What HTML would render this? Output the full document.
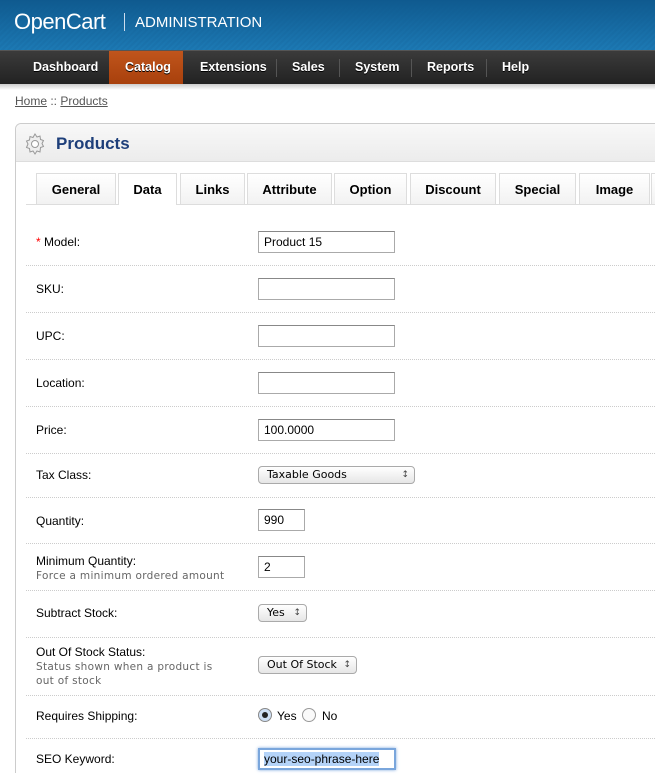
<!DOCTYPE html>
<html><head><meta charset="utf-8"><style>
*{margin:0;padding:0;box-sizing:border-box}
html{overflow:hidden;height:780px}
body{width:655px;height:780px;overflow:hidden;background:#fff;font-family:"Liberation Sans",sans-serif;font-size:12px;color:#000;position:relative}
.a{position:absolute}
#hdr{left:0;top:0;width:655px;height:50px;background:repeating-linear-gradient(135deg,#1a6fa8 0 2px,#1c76b0 2px 4px);background-color:#1b72ac}
#hdr:after{content:"";position:absolute;left:0;right:0;top:0;bottom:0;background:linear-gradient(#0f5a8f,rgba(30,130,190,.3));}
#nav{left:0;top:50px;width:655px;height:34px;background:linear-gradient(#3b3b3b,#222);border-top:1px solid #555}
.ni{top:0;height:33px;line-height:33px;color:#fff;font-size:12.5px;font-weight:bold;text-shadow:0 1px 0 #000}
.sep{top:8px;width:1px;height:18px;background:#555}
.lbl{left:36px;font-size:12px}
.sub{color:#666;font-family:"DejaVu Sans",sans-serif;font-size:10.5px;letter-spacing:.3px}
.ln{left:26px;width:629px;border-top:1px dotted #ccc;height:0}
.in{left:258px;width:137px;height:22px;border:1px solid #aaa;border-top-color:#888;background:#fff;padding:2px 5px;font-size:12px;line-height:16px}
.sel{height:18px;border:1px solid #aaa;border-radius:4px;background:linear-gradient(#fff,#e6e6e6);font-size:11px;line-height:16px;padding-left:8px;font-family:"DejaVu Sans",sans-serif}
.sel:after{content:"\2195";position:absolute;right:5px;top:0;font-size:9px;color:#444}
.tab{top:173px;height:31px;border:1px solid #ddd;border-bottom:none;background:linear-gradient(#fff,#f2f2f2);font-weight:bold;font-size:13px;text-align:center;line-height:31px}
</style></head><body>
<div id="hdr" class="a"></div>
<div class="a" style="left:14px;top:9px;color:#fff;font-size:22px;z-index:2;letter-spacing:-.5px">OpenCart</div>
<div class="a" style="left:124px;top:13px;width:1px;height:18px;background:#cde;z-index:2"></div>
<div class="a" style="left:135px;top:14px;color:#fff;font-size:15px;z-index:2">ADMINISTRATION</div>
<div id="nav" class="a">
<div class="a ni" style="left:33px">Dashboard</div>
<div class="a" style="left:109px;top:0;width:74px;height:33px;background:linear-gradient(#c0551c,#a8400c)"></div>
<div class="a ni" style="left:125px">Catalog</div>
<div class="a ni" style="left:200px">Extensions</div><div class="a sep" style="left:276px"></div>
<div class="a ni" style="left:292px">Sales</div><div class="a sep" style="left:339px"></div>
<div class="a ni" style="left:355px">System</div><div class="a sep" style="left:411px"></div>
<div class="a ni" style="left:427px">Reports</div><div class="a sep" style="left:486px"></div>
<div class="a ni" style="left:502px">Help</div>
</div>
<div class="a" style="left:0;top:84px;width:655px;height:6px;background:linear-gradient(#ccc,#fff)"></div>
<div class="a" style="left:15px;top:94px;color:#555;font-size:12px"><u>Home</u> :: <u>Products</u></div>
<div class="a" style="left:15px;top:123px;width:650px;height:650px;border:1px solid #ccc;border-bottom:none;border-radius:6px 0 0 0"></div>
<div class="a" style="left:16px;top:124px;width:640px;height:38px;background:linear-gradient(#f8f8f8,#ececec);border-bottom:1px solid #ddd;border-radius:6px 0 0 0"></div>
<svg class="a" style="left:23px;top:132px" width="24" height="24" viewBox="0 0 24 24"><path d="M12 2l2 3 3-1 .5 3.5 3 1-1.5 3 1.5 3-3 1L17 20l-3-1-2 3-2-3-3 1-.5-3.5-3-1L5 12 3.5 9l3-1L7 4.5l3 1z" fill="#eee" stroke="#999"/><circle cx="12" cy="12" r="3.5" fill="#fff" stroke="#999"/></svg>
<div class="a" style="left:56px;top:134px;color:#1e3f7a;font-weight:bold;font-size:17px">Products</div>
<div class="a" style="left:26px;top:204px;width:629px;border-top:1px solid #ddd"></div>
<div class="a tab" style="left:36px;width:80px">General</div>
<div class="a tab" style="left:118px;width:59px;height:32px;background:#fff">Data</div>
<div class="a tab" style="left:180px;width:65px">Links</div>
<div class="a tab" style="left:247px;width:85px">Attribute</div>
<div class="a tab" style="left:334px;width:73px">Option</div>
<div class="a tab" style="left:410px;width:86px">Discount</div>
<div class="a tab" style="left:499px;width:77px">Special</div>
<div class="a tab" style="left:579px;width:71px">Image</div>
<div class="a tab" style="left:651px;width:20px"></div>

<div class="a lbl" style="top:235px"><span style="color:red">*</span> Model:</div>
<div class="a in" style="top:231px">Product 15</div>
<div class="a ln" style="top:265px"></div>
<div class="a lbl" style="top:282px">SKU:</div><div class="a in" style="top:278px"></div>
<div class="a ln" style="top:312px"></div>
<div class="a lbl" style="top:329px">UPC:</div><div class="a in" style="top:325px"></div>
<div class="a ln" style="top:359px"></div>
<div class="a lbl" style="top:376px">Location:</div><div class="a in" style="top:372px"></div>
<div class="a ln" style="top:406px"></div>
<div class="a lbl" style="top:423px">Price:</div><div class="a in" style="top:419px">100.0000</div>
<div class="a ln" style="top:453px"></div>
<div class="a lbl" style="top:468px">Tax Class:</div><div class="a sel" style="left:258px;top:466px;width:157px">Taxable Goods</div>
<div class="a ln" style="top:497px"></div>
<div class="a lbl" style="top:514px">Quantity:</div><div class="a in" style="top:509px;width:47px">990</div>
<div class="a ln" style="top:543px"></div>
<div class="a lbl" style="top:554px">Minimum Quantity:<br><span class="sub">Force a minimum ordered amount</span></div><div class="a in" style="top:556px;width:47px">2</div>
<div class="a ln" style="top:590px"></div>
<div class="a lbl" style="top:606px">Subtract Stock:</div><div class="a sel" style="left:258px;top:604px;width:49px">Yes</div>
<div class="a ln" style="top:637px"></div>
<div class="a lbl" style="top:645px">Out Of Stock Status:<br><span class="sub">Status shown when a product is<br>out of stock</span></div><div class="a sel" style="left:258px;top:656px;width:99px">Out Of Stock</div>
<div class="a ln" style="top:695px"></div>
<div class="a lbl" style="top:709px">Requires Shipping:</div>
<div class="a" style="left:258px;top:708px;width:14px;height:14px;border:1px solid #888;border-radius:50%;background:#cfe0f5"><div style="margin:3px;width:6px;height:6px;border-radius:50%;background:#222"></div></div>
<div class="a" style="left:277px;top:709px">Yes</div>
<div class="a" style="left:302px;top:708px;width:14px;height:14px;border:1px solid #999;border-radius:50%;background:#fafafa"></div>
<div class="a" style="left:322px;top:709px">No</div>
<div class="a ln" style="top:738px"></div>
<div class="a lbl" style="top:752px">SEO Keyword:</div>
<div class="a in" style="top:748px;width:138px;border:2px solid #7aa6dc;box-shadow:0 0 3px #7aa6dc;padding:1px 4px"><span style="background:#b4d3f8">your-seo-phrase-here</span></div>
</body></html>
